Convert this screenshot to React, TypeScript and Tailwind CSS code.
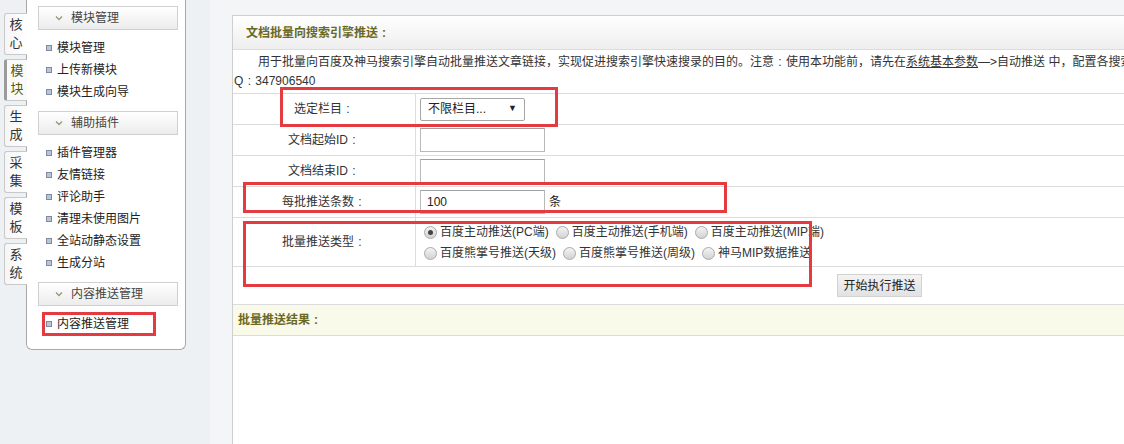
import React from "react"

const tabs = [
  { label: ["核", "心"], active: false },
  { label: ["模", "块"], active: true },
  { label: ["生", "成"], active: false },
  { label: ["采", "集"], active: false },
  { label: ["模", "板"], active: false },
  { label: ["系", "统"], active: false },
]

const groups = [
  { title: "模块管理", items: ["模块管理", "上传新模块", "模块生成向导"] },
  { title: "辅助插件", items: ["插件管理器", "友情链接", "评论助手", "清理未使用图片", "全站动静态设置", "生成分站"] },
  { title: "内容推送管理", items: ["内容推送管理"] },
]

const radios = [
  ["百度主动推送(PC端)", "百度主动推送(手机端)", "百度主动推送(MIP端)"],
  ["百度熊掌号推送(天级)", "百度熊掌号推送(周级)", "神马MIP数据推送"],
]

// full-width colon drawn centred, like the original font does
function Colon() {
  return <span className="inline-block w-[12px] text-center indent-0">:</span>
}

function Chevron() {
  return (
    <svg width="8" height="6" viewBox="0 0 8 6" className="mr-[8px]">
      <path d="M1 1.5 L4 4.5 L7 1.5" fill="none" stroke="#8aa070" strokeWidth="1.3" />
    </svg>
  )
}

function Radio({ checked }: { checked?: boolean }) {
  return (
    <span className="relative inline-flex w-[13px] h-[13px] rounded-full border border-[#a9a9a9] bg-gradient-to-b from-[#f4f4f4] to-[#d2d2d2] items-center justify-center mr-[3px]">
      {checked && <span className="w-[5px] h-[5px] rounded-full bg-[#444]" />}
    </span>
  )
}

function Row({ label, children, h }: { label: string; children: React.ReactNode; h: string }) {
  return (
    <div className={`grid grid-cols-[183px_1fr] border-b border-[#dcdcdc] ${h}`}>
      <div className="border-r border-[#dcdcdc] flex items-center justify-center text-[#333]">
        <span>
          {label}
          <Colon />
        </span>
      </div>
      <div className="flex items-center pl-[4px]">{children}</div>
    </div>
  )
}

export default function App() {
  return (
    <div
      className="relative w-[1124px] h-[444px] overflow-hidden flex bg-[#eef1f3] text-[12px] text-[#222]"
      style={{ fontFamily: '"Liberation Sans", "Noto Sans CJK SC", sans-serif' }}
    >
      {/* left column */}
      <div className="w-[210px] shrink-0 flex items-start">
        <div className="w-[27px] pt-[13px] pl-[4px] flex flex-col gap-[4px] relative z-10 -mr-px">
          {tabs.map((t, i) => (
            <div
              key={i}
              className={`h-[42px] flex flex-col items-center justify-center text-[13px] leading-[18px] rounded-l-[3px] border border-r-0 ${
                t.active
                  ? "bg-[#fafafa] border-[#c8c8c8] border-l-[3px] border-l-[#9b9b9b] text-[#4f5a0f]"
                  : "bg-gradient-to-r from-[#f6f6f6] to-[#ffffff] border-[#c9c9c9] text-[#333]"
              }`}
            >
              <span>{t.label[0]}</span>
              <span>{t.label[1]}</span>
            </div>
          ))}
        </div>
        <div className="w-[160px] h-[350px] bg-white border border-t-0 border-[#a9a9a9] rounded-b-[6px] pl-[11px] pr-[7px] pt-[6px]">
          {groups.map((g, gi) => (
            <div key={gi} className={gi === 0 ? "" : "mt-[8px]"}>
              <div className="h-[24px] flex items-center pl-[16px] border border-[#d0d0d0] bg-gradient-to-b from-white to-[#ececec] text-[#444]">
                <Chevron />
                <span>{g.title}</span>
              </div>
              <div className="mt-[7px]">
                {g.items.map((it) => (
                  <div key={it} className="h-[22px] flex items-center pl-[8px]">
                    <span className="w-[6px] h-[6px] border border-[#7d8aa0] bg-[#b9c6da] mr-[5px]" />
                    <span>{it}</span>
                  </div>
                ))}
              </div>
            </div>
          ))}
        </div>
      </div>

      {/* main */}
      <div className="flex-1 bg-[#f4f5f6] pt-[15px] pl-[22px]">
        <div className="w-[1294px] h-[460px] bg-white border-l border-t border-[#cfcfcf]">
          <div className="h-[34px] flex items-center pl-[13px] border-b border-[#dcdcdc] bg-gradient-to-b from-white to-[#eeeeee]">
            <span className="font-bold text-[#6a691f]">
              文档批量向搜索引擎推送
              <Colon />
            </span>
          </div>
          <div className="h-[44px] border-b border-[#dcdcdc] pl-[1px] pt-[3px] leading-[19px] text-[#333]">
            <div className="whitespace-nowrap indent-[24px]">
              用于批量向百度及神马搜索引擎自动批量推送文章链接，实现促进搜索引擎快速搜录的目的。注意
              <Colon />
              使用本功能前，请先在
              <span className="underline">系统基本参数</span>
              —&gt;自动推送 中，配置各搜索引擎
            </div>
            <div>
              Q<Colon />
              347906540
            </div>
          </div>

          <Row label="选定栏目" h="h-[31px]">
            <div className="w-[105px] h-[23px] border border-[#a6a6a6] rounded-[2px] flex items-center justify-between pl-[7px] pr-[7px] text-[#222]">
              <span>不限栏目...</span>
              <span className="text-[9px]">▼</span>
            </div>
          </Row>
          <Row label="文档起始ID" h="h-[31px]">
            <div className="w-[125px] h-[24px] border border-[#b9b9b9] border-t-[#a0a0a0]" />
          </Row>
          <Row label="文档结束ID" h="h-[31px]">
            <div className="w-[125px] h-[24px] border border-[#b9b9b9] border-t-[#a0a0a0]" />
          </Row>
          <Row label="每批推送条数" h="h-[31px]">
            <div className="w-[125px] h-[24px] border border-[#b9b9b9] border-t-[#a0a0a0] flex items-center pl-[6px]">100</div>
            <span className="ml-[4px]">条</span>
          </Row>
          <div className="grid grid-cols-[183px_1fr] border-b border-[#dcdcdc] h-[49px]">
            <div className="border-r border-[#dcdcdc] flex items-center justify-center text-[#333]">
              <span>
                批量推送类型
                <Colon />
              </span>
            </div>
            <div className="pl-[8px] pt-[4px] leading-[21px] text-[#333]">
              {radios.map((line, li) => (
                <div key={li} className="flex items-center whitespace-nowrap">
                  {line.map((r, ri) => (
                    <span key={r} className="inline-flex items-center mr-[7px]">
                      <Radio checked={li === 0 && ri === 0} />
                      {r}
                    </span>
                  ))}
                </div>
              ))}
            </div>
          </div>
          <div className="h-[38px] border-b border-[#dcdcdc] flex items-center justify-center">
            <button className="h-[23px] px-[5px] border border-[#d2d2d2] bg-gradient-to-b from-[#f3f3f3] to-[#e2e2e2] text-[12px] text-[#222]">
              开始执行推送
            </button>
          </div>
          <div className="h-[31px] border-b border-[#dcdcdc] bg-[#fafaea] flex items-center pl-[5px]">
            <span className="font-bold text-[#6a691f]">
              批量推送结果
              <Colon />
            </span>
          </div>
        </div>
      </div>

      {/* red annotation boxes */}
      <div className="absolute left-[280px] top-[87px] w-[278px] h-[40px] border-[3px] border-[#e53a40]" />
      <div className="absolute left-[243px] top-[182px] w-[484px] h-[31px] border-[3px] border-[#e53a40]" />
      <div className="absolute left-[243px] top-[221px] w-[569px] h-[66px] border-[3px] border-[#e53a40]" />
      <div className="absolute left-[42px] top-[312px] w-[114px] h-[24px] border-[3px] border-[#e53a40]" />
    </div>
  )
}
